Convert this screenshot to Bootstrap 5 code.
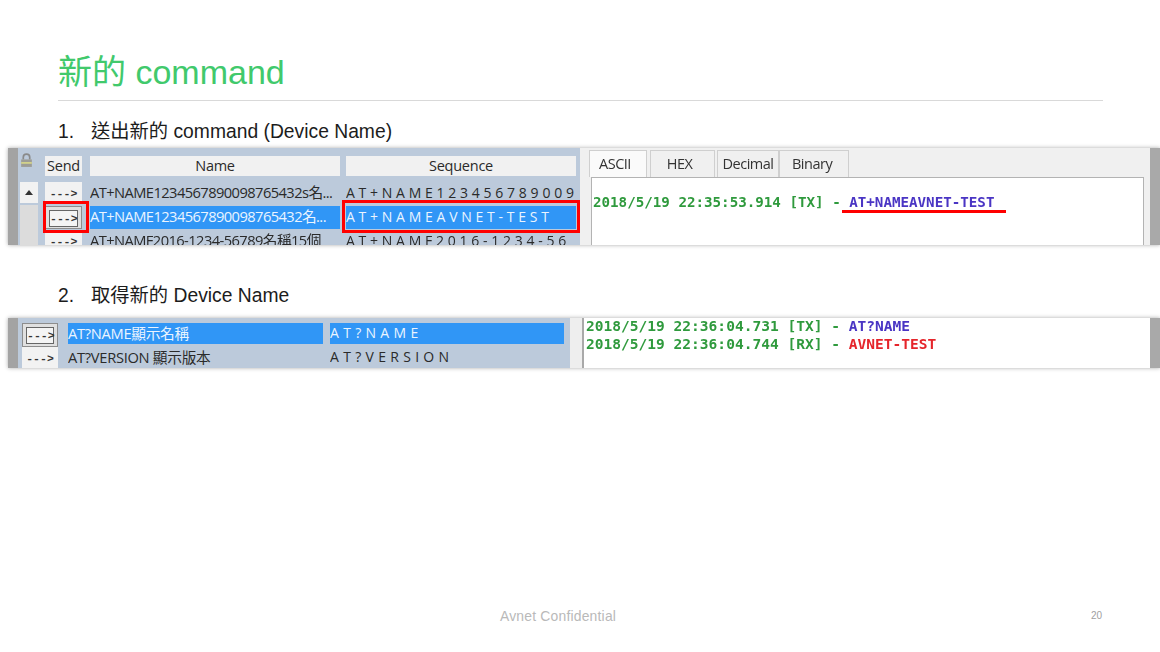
<!DOCTYPE html>
<html lang="zh-Hant">
<head>
<meta charset="utf-8">
<title>新的 command</title>
<link href="https://cdn.jsdelivr.net/npm/bootstrap@5.3.0/dist/css/bootstrap.min.css" rel="stylesheet">
<style>
html,body{margin:0;background:#fff;overflow:hidden}
.slide{width:1160px;height:652px;font-family:"Liberation Sans","Noto Sans CJK TC",sans-serif;color:#1c1c1c}
.slide-title{margin:0 57px 0 58px;padding-top:51px;height:101px;box-sizing:border-box;border-bottom:1px solid #d9d9d9;font-size:34px;line-height:42px;color:#41c96c;font-weight:400}
.step{display:flex;margin:0 0 0 58px;font-size:19.3px;line-height:24px}
.step-num{width:33px}
.step-a{margin-top:19px}
.step-b{margin-top:39px}
.shot{position:relative;margin:4px 0 0 8px;background:#f0f0f0;overflow:hidden;box-shadow:0 0 4px #aaa}
.shot-a{height:97px}
.shot-b{height:50px;margin-top:10px}
.shot-inner{height:100%;filter:blur(.5px)}
.strip{width:10px;background:#a3a3a3;flex:none}
.endbar{width:10px;background:#a9a9a9;flex:none}
.grid-area{background:#bccadb;font-family:"Open Sans","Noto Sans CJK TC",sans-serif;color:#2a2a2a;flex:none}
.area-a{width:562px;display:flex}
.gutter{width:27px;flex:none;padding:5px 0 0 2px}
.scroll-btn{width:18px;height:21px;margin-top:14px;background:#f2f2f2;display:flex;align-items:center;justify-content:center}
.scroll-track{width:18px;height:60px;margin-top:2px;background:#dcdcdc}
.tbl{display:grid;grid-template-columns:37px 250px 228px;column-gap:8px;grid-auto-rows:min-content}
.tbl-a{padding-top:8px}
.head-cell{height:20px;background:#f1f1f1;text-align:center;font-size:14.5px;line-height:20px;margin-bottom:6px;letter-spacing:-.25px}
.head-cell+.head-cell+.head-cell{margin-left:-2px}
.cell{height:23px;margin-bottom:1px;font-size:14.7px;line-height:21px;white-space:nowrap;overflow:hidden;letter-spacing:-.58px}
.seq{margin-left:-2px;letter-spacing:3.75px;font-size:14px}
.picked{background:#3096f6;color:#eaf4ff}
.go{height:21px;background:#f2f2f2;font-family:"Liberation Mono",monospace;font-size:11.5px;line-height:23px;text-align:center;font-weight:700;color:#333;white-space:nowrap;margin-bottom:3px}
.go-on{height:23px;margin:0 0 1px;padding:3px;background:#e0e0e0;border:1px solid #8d8d8d}
.go-on span{display:block;height:17px;line-height:15px;border:1px solid #666;background:#f4f4f4}
.rpane{flex:1;min-width:0;padding:2px 6px 0 9px}
.tabset{display:flex;height:27px;align-items:stretch}
.tabby{border:1px solid #cfcfcf;border-bottom:0;background:#f0f0f0;font-family:"Open Sans",sans-serif;font-size:14.5px;letter-spacing:-.5px;text-align:center;line-height:26px;color:#333}
.t1{width:58px;background:#fafafa;margin-right:3px;padding-right:6px}
.t2{width:65px;margin-right:2px;padding-right:6px}
.t3{width:62px}
.t4{width:70px;text-align:left;padding-left:12px}
.logbox{background:#fff;border:1px solid #b3b3b3;border-bottom:0;height:70px;margin-left:2px;padding:15px 0 0 1px}
.logline{font-family:"DejaVu Sans Mono",monospace;font-weight:700;color:#2f9a3d;white-space:pre;font-size:14.2px;line-height:18px}
.tx{color:#4a35c4}
.rx{color:#e5252b}
.area-b{width:552px;padding:5px 0 0 4px}
.tbl-b{display:grid;grid-template-columns:39px 255px 234px;column-gap:7px}
.tbl-b .go{width:36px;margin:0}
.tbl-b .cell{height:21px;margin:0;line-height:20px;letter-spacing:-.3px}
.tbl-b .seq{margin-left:0;letter-spacing:4.3px}
.tbl-b .go-b{height:24px;margin-bottom:0}
.divider{width:14px;flex:none;background:#eeeeee;border-right:2px solid #a9a9a9}
.logbox-b{flex:1;background:#fff;padding:0 0 0 2px;min-width:0}
.logbox-b .logline{font-size:14.55px;line-height:18px}
.logbox-b .logline:first-child{margin-top:-1px}
.mark-box{position:absolute;border:3.5px solid #f00}
.mb1{left:35px;top:53px;width:46px;height:32px}
.mb2{left:334px;top:52px;width:238px;height:33px}
.under{position:absolute;left:834px;top:62px;width:164px;height:3px;background:#f00}
.foot{position:absolute;left:0;right:0;top:608px;height:16px}
.foot-l{position:absolute;left:500px;top:0;font-size:13.9px;color:#b9b9b9;line-height:16px;letter-spacing:.2px}
.foot-r{position:absolute;left:1091px;top:0;font-size:10px;color:#a0a0a0;line-height:16px}
</style>
</head>
<body>
<div class="slide position-relative">
  <h1 class="slide-title">新的 command</h1>

  <div class="step step-a"><span class="step-num">1.</span><span>送出新的 command (Device Name)</span></div>
  <div class="shot shot-a">
    <div class="shot-inner d-flex">
      <div class="strip"></div>
      <div class="grid-area area-a">
        <div class="gutter">
          <svg width="13" height="15" viewBox="0 0 12 14" class="d-block"><path d="M3 6V4a3 3 0 0 1 6 0v2" fill="none" stroke="#8a8a8a" stroke-width="1.6"/><rect x="1" y="6" width="10" height="7" fill="#9c9c96"/><rect x="1" y="8.5" width="10" height="1.5" fill="#d8d88a"/></svg>
          <div class="scroll-btn"><svg width="8" height="5" viewBox="0 0 8 5"><path d="M0 5 4 0l4 5z" fill="#333"/></svg></div>
          <div class="scroll-track"></div>
        </div>
        <div class="tbl tbl-a">
          <div class="head-cell">Send</div><div class="head-cell">Name</div><div class="head-cell">Sequence</div>
          <div class="go">---&gt;</div><div class="cell">AT+NAME1234567890098765432s名...</div><div class="cell seq">AT+NAME123456789009</div>
          <div class="go go-on"><span>---&gt;</span></div><div class="cell picked">AT+NAME1234567890098765432名...</div><div class="cell seq picked">AT+NAMEAVNET-TEST</div>
          <div class="go">---&gt;</div><div class="cell">AT+NAMF2016-1234-56789名稱15個</div><div class="cell seq">AT+NAMF2016-1234-56</div>
        </div>
      </div>
      <div class="rpane">
        <div class="tabset">
          <div class="tabby t1">ASCII</div><div class="tabby t2">HEX</div><div class="tabby t3">Decimal</div><div class="tabby t4">Binary</div>
        </div>
        <div class="logbox"><div class="logline">2018/5/19 22:35:53.914 [TX] - <span class="tx">AT+NAMEAVNET-TEST</span></div></div>
      </div>
      <div class="endbar"></div>
    </div>
    <div class="mark-box mb1"></div>
    <div class="mark-box mb2"></div>
    <div class="under"></div>
  </div>

  <div class="step step-b"><span class="step-num">2.</span><span>取得新的 Device Name</span></div>
  <div class="shot shot-b">
    <div class="shot-inner d-flex">
      <div class="strip"></div>
      <div class="grid-area area-b">
        <div class="tbl-b">
          <div class="go go-on go-b"><span>---&gt;</span></div><div class="cell picked">AT?NAME顯示名稱</div><div class="cell seq picked">AT?NAME</div>
          <div class="go">---&gt;</div><div class="cell">AT?VERSION 顯示版本</div><div class="cell seq">AT?VERSION</div>
        </div>
      </div>
      <div class="divider"></div>
      <div class="logbox-b">
        <div class="logline">2018/5/19 22:36:04.731 [TX] - <span class="tx">AT?NAME</span></div>
        <div class="logline">2018/5/19 22:36:04.744 [RX] - <span class="rx">AVNET-TEST</span></div>
      </div>
      <div class="endbar"></div>
    </div>
  </div>

  <div class="foot"><span class="foot-l">Avnet Confidential</span><span class="foot-r">20</span></div>
</div>
</body>
</html>
